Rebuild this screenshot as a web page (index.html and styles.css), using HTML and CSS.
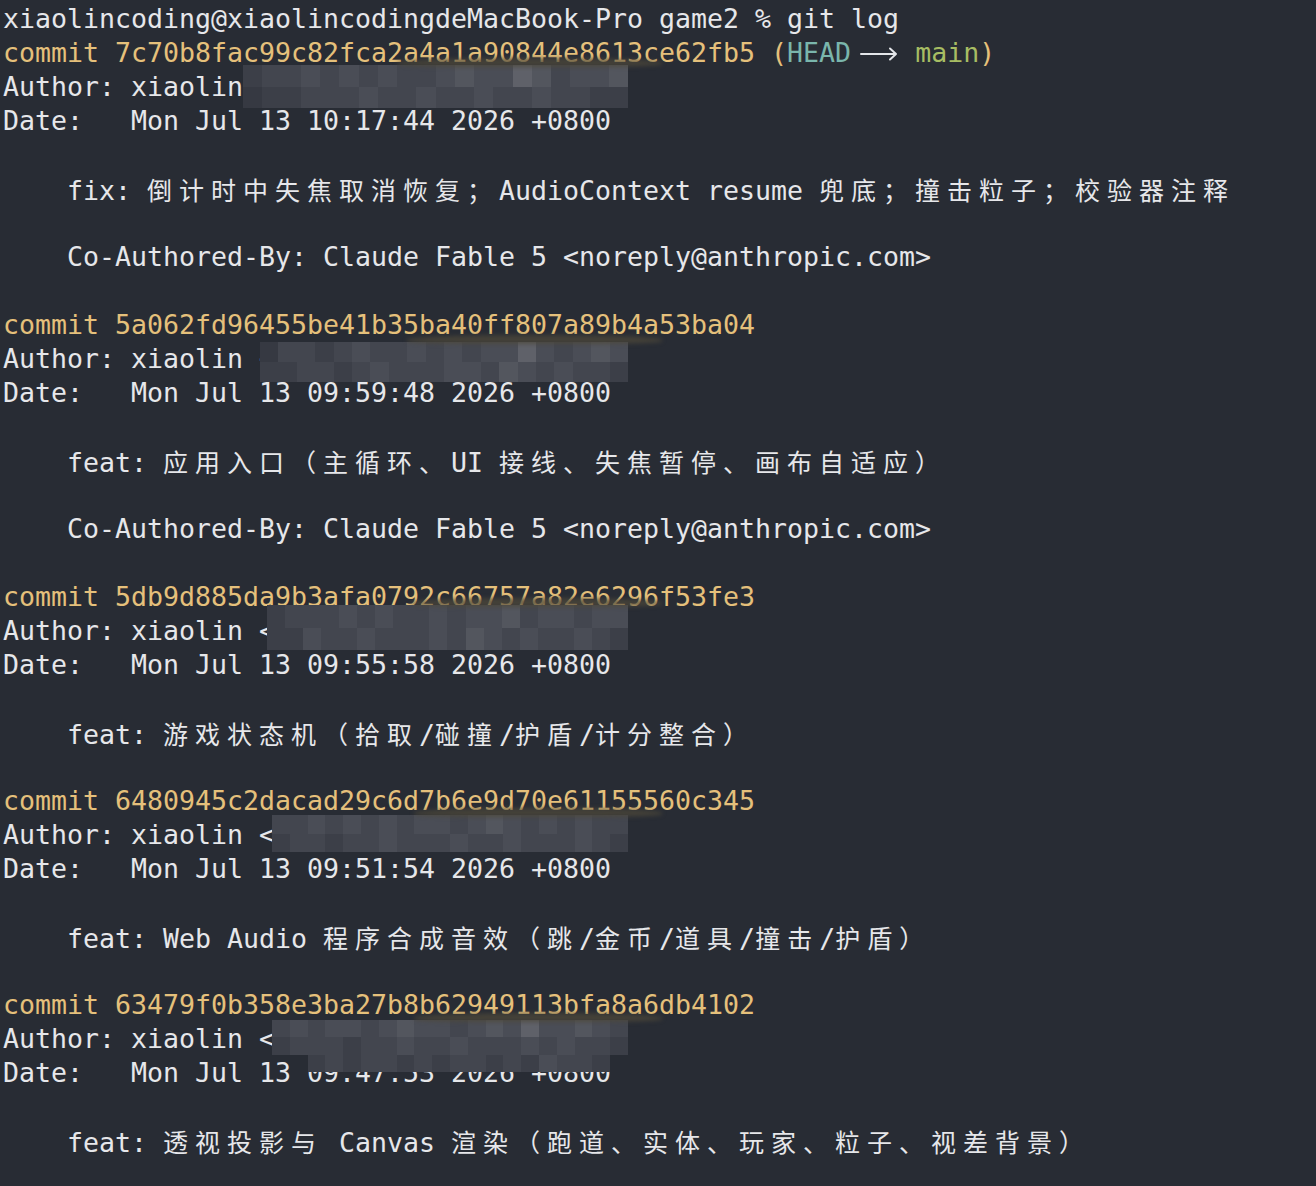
FILE: index.html
```html
<!DOCTYPE html>
<html lang="zh">
<head>
<meta charset="utf-8">
<title>git log</title>
<link rel="stylesheet" href="styles.css">
</head>
<body>
<div class="term">
  <div class="ln">xiaolincoding@xiaolincodingdeMacBook-Pro game2 % git log</div>
  <div class="ln y">commit 7c70b8fac99c82fca2a4a1a90844e8613ce62fb5 (<span class="hd">HEAD</span> <span class="ar"><svg width="32" height="34" viewBox="0 0 32 34"><path d="M-6 18H29M23 12.5L29 18L23 23.5" fill="none" stroke="#e4e6ea" stroke-width="2" stroke-linecap="round" stroke-linejoin="round"/></svg></span> <span class="mn">main</span>)</div>
  <div class="ln">Author: xiaolin &lt;<div class="mz mz1"><i class="b"></i><i class="c"></i><i class="c"></i><i class="d"></i><i class="c"></i><i class="d"></i><i class="c"></i><i class="d"></i><i class="c"></i><i class="c"></i><i class="d"></i><i class="e"></i><i class="d"></i><i class="d"></i><i class="f"></i><i class="e"></i><i class="c"></i><i class="d"></i><i class="d"></i><i class="e"></i><i class="a"></i><i class="b"></i><i class="b"></i><i class="c"></i><i class="c"></i><i class="c"></i><i class="d"></i><i class="c"></i><i class="c"></i><i class="d"></i><i class="c"></i><i class="c"></i><i class="d"></i><i class="c"></i><i class="c"></i><i class="d"></i><i class="c"></i><i class="c"></i><i class="b"></i><i class="b"></i></div></div>
  <div class="ln">Date:   Mon Jul 13 10:17:44 2026 +0800</div>
  <div class="ln"></div>
  <div class="ln">    fix: <span class="z">倒计时中失焦取消恢复；</span>AudioContext resume <span class="z">兜底；撞击粒子；校验器注释</span></div>
  <div class="ln"></div>
  <div class="ln">    Co-Authored-By: Claude Fable 5 &lt;noreply@anthropic.com&gt;</div>
  <div class="ln"></div>

  <div class="ln y">commit 5a062fd96455be41b35ba40ff807a89b4a53ba04</div>
  <div class="ln">Author: xiaolin &lt;<div class="mz mz2"><i class="a"></i><i class="c"></i><i class="c"></i><i class="b"></i><i class="c"></i><i class="d"></i><i class="c"></i><i class="c"></i><i class="d"></i><i class="c"></i><i class="d"></i><i class="c"></i><i class="d"></i><i class="d"></i><i class="f"></i><i class="d"></i><i class="c"></i><i class="d"></i><i class="e"></i><i class="d"></i><i class="b"></i><i class="b"></i><i class="c"></i><i class="c"></i><i class="b"></i><i class="c"></i><i class="d"></i><i class="c"></i><i class="c"></i><i class="c"></i><i class="d"></i><i class="d"></i><i class="c"></i><i class="e"></i><i class="d"></i><i class="c"></i><i class="d"></i><i class="c"></i><i class="c"></i><i class="b"></i></div></div>
  <div class="ln">Date:   Mon Jul 13 09:59:48 2026 +0800</div>
  <div class="ln"></div>
  <div class="ln">    feat: <span class="z">应用入口（主循环、</span>UI <span class="z">接线、失焦暂停、画布自适应）</span></div>
  <div class="ln"></div>
  <div class="ln">    Co-Authored-By: Claude Fable 5 &lt;noreply@anthropic.com&gt;</div>
  <div class="ln"></div>

  <div class="ln y">commit 5db9d885da9b3afa0792c66757a82e6296f53fe3</div>
  <div class="ln">Author: xiaolin &lt;<div class="mz mz3"><i class="b"></i><i class="c"></i><i class="c"></i><i class="c"></i><i class="d"></i><i class="c"></i><i class="d"></i><i class="c"></i><i class="c"></i><i class="d"></i><i class="c"></i><i class="d"></i><i class="d"></i><i class="e"></i><i class="c"></i><i class="d"></i><i class="d"></i><i class="c"></i><i class="d"></i><i class="d"></i><i class="b"></i><i class="b"></i><i class="d"></i><i class="c"></i><i class="c"></i><i class="d"></i><i class="c"></i><i class="c"></i><i class="c"></i><i class="d"></i><i class="c"></i><i class="e"></i><i class="d"></i><i class="c"></i><i class="d"></i><i class="c"></i><i class="c"></i><i class="d"></i><i class="c"></i><i class="b"></i></div></div>
  <div class="ln">Date:   Mon Jul 13 09:55:58 2026 +0800</div>
  <div class="ln"></div>
  <div class="ln">    feat: <span class="z">游戏状态机（拾取</span>/<span class="z">碰撞</span>/<span class="z">护盾</span>/<span class="z">计分整合）</span></div>
  <div class="ln"></div>

  <div class="ln y">commit 6480945c2dacad29c6d7b6e9d70e61155560c345</div>
  <div class="ln">Author: xiaolin &lt;<div class="mz mz4"><i class="c"></i><i class="c"></i><i class="d"></i><i class="c"></i><i class="d"></i><i class="c"></i><i class="d"></i><i class="c"></i><i class="d"></i><i class="d"></i><i class="c"></i><i class="d"></i><i class="e"></i><i class="d"></i><i class="c"></i><i class="d"></i><i class="c"></i><i class="d"></i><i class="c"></i><i class="c"></i><i class="b"></i><i class="c"></i><i class="c"></i><i class="b"></i><i class="c"></i><i class="c"></i><i class="d"></i><i class="c"></i><i class="c"></i><i class="c"></i><i class="d"></i><i class="c"></i><i class="c"></i><i class="d"></i><i class="c"></i><i class="c"></i><i class="c"></i><i class="d"></i><i class="c"></i><i class="b"></i></div></div>
  <div class="ln">Date:   Mon Jul 13 09:51:54 2026 +0800</div>
  <div class="ln"></div>
  <div class="ln">    feat: Web Audio <span class="z">程序合成音效（跳</span>/<span class="z">金币</span>/<span class="z">道具</span>/<span class="z">撞击</span>/<span class="z">护盾）</span></div>
  <div class="ln"></div>

  <div class="ln y">commit 63479f0b358e3ba27b8b62949113bfa8a6db4102</div>
  <div class="ln">Author: xiaolin &lt;<div class="mz mz5"><i class="c"></i><i class="d"></i><i class="c"></i><i class="d"></i><i class="d"></i><i class="c"></i><i class="d"></i><i class="e"></i><i class="d"></i><i class="d"></i><i class="c"></i><i class="d"></i><i class="e"></i><i class="d"></i><i class="f"></i><i class="d"></i><i class="d"></i><i class="e"></i><i class="d"></i><i class="c"></i><i class="b"></i><i class="c"></i><i class="c"></i><i class="c"></i><i class="b"></i><i class="c"></i><i class="c"></i><i class="d"></i><i class="c"></i><i class="c"></i><i class="d"></i><i class="c"></i><i class="c"></i><i class="c"></i><i class="d"></i><i class="c"></i><i class="d"></i><i class="c"></i><i class="c"></i><i class="b"></i><i class="n"></i><i class="n"></i><i class="b"></i><i class="c"></i><i class="b"></i><i class="c"></i><i class="c"></i><i class="b"></i><i class="c"></i><i class="b"></i><i class="c"></i><i class="c"></i><i class="b"></i><i class="c"></i><i class="b"></i><i class="d"></i><i class="c"></i><i class="c"></i><i class="b"></i><i class="n"></i></div></div>
  <div class="ln">Date:   Mon Jul 13 09:47:53 2026 +0800</div>
  <div class="ln"></div>
  <div class="ln">    feat: <span class="z">透视投影与</span> Canvas <span class="z">渲染（跑道、实体、玩家、粒子、视差背景）</span></div>
  <div class="ln"></div>
</div>
</body>
</html>
```

FILE: styles.css
```css
html, body {
  margin: 0;
  padding: 0;
  background: #282c34;
}

body {
  width: 1316px;
  height: 1186px;
  overflow: hidden;
}

.term {
  padding: 2px 0 0 3px;
  font-family: "DejaVu Sans Mono", "Liberation Mono", "Noto Sans CJK SC", monospace;
  font-size: 26.58px;
  color: #e6e7ea;
}

.ln {
  position: relative;
  height: 34px;
  line-height: 34px;
  white-space: pre;
}

.y {
  color: #e5c07b;
}

.hd {
  color: #7ab6ac;
}

.mn {
  color: #a7bd63;
}

.ar {
  display: inline-block;
  width: 32px;
  height: 34px;
  vertical-align: top;
}

.ar svg {
  display: block;
  overflow: visible;
}

.z {
  font-family: "Noto Sans CJK SC", sans-serif;
  font-size: 25px;
  letter-spacing: 7px;
}

/* pixelated (redacted) e-mail addresses */
.mz {
  position: absolute;
  z-index: 1;
  display: grid;
  grid-template-columns: repeat(20, 1fr);
  grid-auto-rows: 1fr;
  filter: blur(0.6px);
}

.mz::before {
  content: "";
  position: absolute;
  top: -7px;
  left: 40%;
  right: -34px;
  height: 9px;
  background: rgba(78, 72, 58, 0.75);
  border-radius: 50% 50% 30% 30%;
  filter: blur(2px);
}

.mz i {
  display: block;
}

.mz .a { background: #363942; }
.mz .b { background: #3c3f48; }
.mz .c { background: #43464f; }
.mz .d { background: #4a4d56; }
.mz .e { background: #53565e; }
.mz .f { background: #5f6169; }
.mz .n { background: transparent; }

.mz1 { left: 240px; top: -5px; width: 385px; height: 43px; }
.mz2 { left: 257px; top: 0; width: 368px; height: 40px; }
.mz3 { left: 264px; top: -9px; width: 361px; height: 45px; }
.mz4 { left: 269px; top: -3px; width: 356px; height: 37px; }
.mz5 { left: 269px; top: -2px; width: 356px; height: 52px; }
```
